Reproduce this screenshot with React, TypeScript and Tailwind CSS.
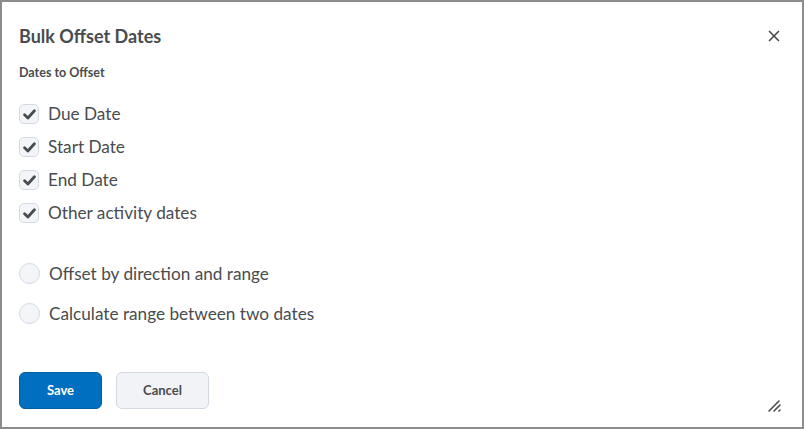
import { X } from "lucide-react";

const dates = ["Due Date", "Start Date", "End Date", "Other activity dates"];
const modes = ["Offset by direction and range", "Calculate range between two dates"];

function CheckIcon() {
  return (
    <svg width="13" height="11" viewBox="0 0 13 11" fill="none">
      <path d="M1.6 5.8 L4.9 9 L11.4 1.8" stroke="#494c4e" strokeWidth="2.8" strokeLinecap="round" strokeLinejoin="round" />
    </svg>
  );
}

export default function App() {
  return (
    <div className="w-[804px] h-[429px] border-2 border-[#8c8c8c] bg-white flex flex-col text-[#494c4e] font-['Lato',sans-serif]">
      {/* Header */}
      <div className="flex items-center justify-between pl-[17px] pr-[19px] pt-[22px]">
        <h1 className="text-[18px] font-bold leading-[24px] text-[#494c4e]">Bulk Offset Dates</h1>
        <X size={18} strokeWidth={2.2} className="text-[#494c4e]" />
      </div>

      <div className="pl-[17px] flex-1 flex flex-col">
        <div className="mt-[17px] text-[12.5px] font-bold leading-[16px]">Dates to Offset</div>

        {/* Checkboxes */}
        <div className="mt-[23px] flex flex-col gap-[13px]">
          {dates.map((d) => (
            <label key={d} className="flex items-center gap-[9px] h-[20px]">
              <span className="w-[20px] h-[20px] rounded-[5px] border border-[#d3d9e3] bg-[#f3f5f8] flex items-center justify-center">
                <CheckIcon />
              </span>
              <span className="text-[17.2px] leading-[20px]">{d}</span>
            </label>
          ))}
        </div>

        {/* Radios */}
        <div className="mt-[40px] flex flex-col gap-[19px]">
          {modes.map((m) => (
            <label key={m} className="flex items-center gap-[9px] h-[21px]">
              <span className="w-[21px] h-[21px] rounded-full border border-[#d3d9e3] bg-[#f3f5f8]" />
              <span className="text-[17.2px] leading-[20px]">{m}</span>
            </label>
          ))}
        </div>

        {/* Footer */}
        <div className="mt-auto mb-[18px] flex items-end justify-between pr-[20px]">
          <div className="flex gap-[14px]">
            <button className="w-[83px] h-[37px] rounded-[6px] bg-[#006fbf] border border-[#005fa3] text-white text-[13px] font-bold">
              Save
            </button>
            <button className="w-[93px] h-[37px] rounded-[6px] bg-[#f1f3f6] border border-[#d3d9e3] text-[#494c4e] text-[13px] font-bold">
              Cancel
            </button>
          </div>
          <svg width="14" height="14" viewBox="0 0 14 14" className="mb-[-4px]">
            <path d="M1 12 L11 2 M6 12 L12 6 M11 12 L12 11" stroke="#494c4e" strokeWidth="1.6" strokeLinecap="round" />
          </svg>
        </div>
      </div>
    </div>
  );
}
